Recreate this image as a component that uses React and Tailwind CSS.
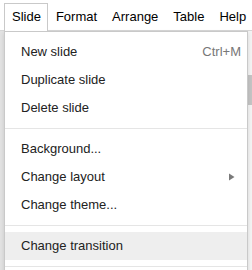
import { Fragment } from "react";

const tabs = ["Slide", "Format", "Arrange", "Table", "Help"];

const groups = [
  [
    { label: "New slide", shortcut: "Ctrl+M" },
    { label: "Duplicate slide" },
    { label: "Delete slide" },
  ],
  [
    { label: "Background..." },
    { label: "Change layout", submenu: true },
    { label: "Change theme..." },
  ],
  [{ label: "Change transition", active: true }],
];

function SubmenuArrow() {
  return (
    <svg width="6" height="8" viewBox="0 0 6 8" className="shrink-0">
      <path d="M0 0.5 L5.5 4 L0 7.5 Z" fill="#7a7a7a" />
    </svg>
  );
}

export default function App() {
  return (
    <div
      className="relative w-[252px] h-[270px] overflow-hidden bg-white text-[13px]"
      style={{ fontFamily: '"Liberation Sans", Arial, sans-serif' }}
    >
      {/* Menu bar */}
      <div className="flex items-end h-[31px] pl-1 border-b border-[#d6d6d6]">
        {tabs.map((tab, i) => (
          <div
            key={tab}
            className={
              i === 0
                ? "relative z-20 h-[28px] -mb-px pl-[7px] pr-[6px] border border-b-0 border-[#c9c9c9] bg-white leading-[26px] text-black"
                : "h-[27px] pl-[7px] pr-[6px] border border-b-0 border-transparent leading-[26px] text-black"
            }
          >
            {tab}
          </div>
        ))}
      </div>

      {/* Page area under the menu */}
      <div className="flex h-[239px]">
        <div className="w-[4px] bg-[#e2e2e2]" />
        <div className="flex-1 bg-white" />
        <div className="w-[4px] bg-[#f3f3f3] pt-[44px]">
          <div className="h-[30px] bg-[#c4c4c4]" />
        </div>
      </div>

      {/* Dropdown */}
      <div className="absolute z-10 left-[4px] top-[31px] w-[244px] bg-white border border-[#c9c9c9] pt-[6px] pb-[6px] shadow-[0_2px_4px_rgba(0,0,0,0.12)]">
        {groups.map((group, gi) => (
          <Fragment key={gi}>
            {gi > 0 && <div className="my-[6px] border-t border-[#e5e5e5]" />}
            {group.map((item) => (
              <div
                key={item.label}
                className={`flex items-center justify-between h-[28px] pl-[16px] pr-[6px] leading-[28px] text-[#222] ${
                  item.active ? "bg-[#eeeeee]" : ""
                }`}
              >
                <span>{item.label}</span>
                {item.shortcut && (
                  <span className="text-[#777]">{item.shortcut}</span>
                )}
                {item.submenu && (
                  <span className="pr-[6px]">
                    <SubmenuArrow />
                  </span>
                )}
              </div>
            ))}
          </Fragment>
        ))}
        <div className="my-[6px] border-t border-[#e5e5e5]" />
        <div className="h-[28px]" />
      </div>
    </div>
  );
}
